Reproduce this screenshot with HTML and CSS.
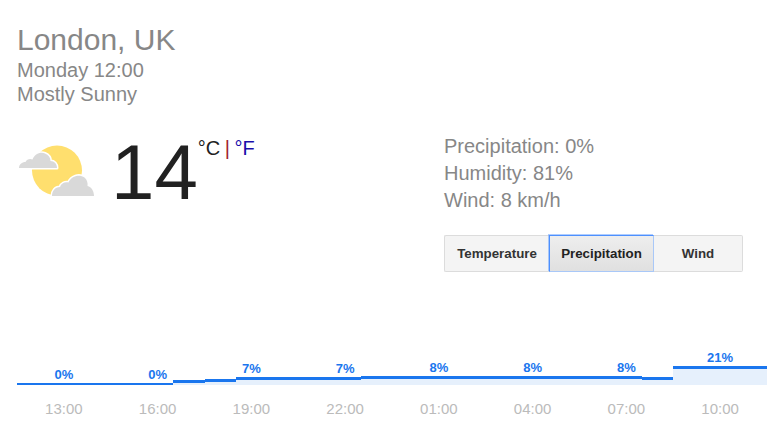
FILE: index.html
```html
<!DOCTYPE html>
<html lang="en">
<head>
<meta charset="utf-8">
<title>London weather</title>
<link rel="stylesheet" href="styles.css">
</head>
<body>
<div class="page">
  <header class="head">
    <div class="city">London, UK</div>
    <div class="sub">Monday 12:00</div>
    <div class="sub">Mostly Sunny</div>
  </header>
  <section class="main">
    <div class="now">
      <svg class="icon" width="80" height="56" viewBox="0 0 80 56" aria-hidden="true">
        <circle class="sun" cx="40" cy="27.5" r="25"/>
        <path class="cloud" d="M2 25C2 21.500 5 19 8.500 19C9.500 16.500 13 15 15.500 16.500C17.500 11.500 23 8.500 28 10.500C31.500 12 33.500 14.500 33.500 18C37.500 18 40 21 40 25Z"/>
        <path class="cloud" d="M35 53C35 48 38 44 43 44C44 40.500 48 38.500 51.500 39.500C54 33.500 62 30.500 67.500 34.500C70 36.500 71 40 70.500 43C74.500 44 77 48 77 53Z"/>
      </svg>
      <div class="temp">14</div>
      <div class="units"><span class="c">°C</span> <span class="sep">|</span> <span class="f">°F</span></div>
    </div>
    <div class="side">
      <div class="facts">
        <div>Precipitation: 0%</div>
        <div>Humidity: 81%</div>
        <div>Wind: 8 km/h</div>
      </div>
      <div class="tabs">
        <div class="tab t1">Temperature</div>
        <div class="tab t2 on">Precipitation</div>
        <div class="tab t3">Wind</div>
      </div>
    </div>
  </section>
  <section class="chart">
    <div class="group"><span class="pct" style="bottom:3px">0%</span><i class="bar zero" style="height:2px"></i><i class="bar zero" style="height:2px"></i><i class="bar zero" style="height:2px"></i></div>
    <div class="group"><span class="pct" style="bottom:3px">0%</span><i class="bar zero" style="height:2px"></i><i class="bar zero" style="height:2px"></i><i class="bar" style="height:5px"></i></div>
    <div class="group"><span class="pct" style="bottom:9px">7%</span><i class="bar" style="height:6px"></i><i class="bar" style="height:8px"></i><i class="bar" style="height:8px"></i></div>
    <div class="group"><span class="pct" style="bottom:9px">7%</span><i class="bar" style="height:8px"></i><i class="bar" style="height:8px"></i><i class="bar" style="height:9px"></i></div>
    <div class="group"><span class="pct" style="bottom:10px">8%</span><i class="bar" style="height:9px"></i><i class="bar" style="height:9px"></i><i class="bar" style="height:9px"></i></div>
    <div class="group"><span class="pct" style="bottom:10px">8%</span><i class="bar" style="height:9px"></i><i class="bar" style="height:9px"></i><i class="bar" style="height:9px"></i></div>
    <div class="group"><span class="pct" style="bottom:10px">8%</span><i class="bar" style="height:9px"></i><i class="bar" style="height:9px"></i><i class="bar" style="height:8px"></i></div>
    <div class="group"><span class="pct" style="bottom:20px">21%</span><i class="bar" style="height:19px"></i><i class="bar" style="height:19px"></i><i class="bar" style="height:19px"></i></div>
  </section>
  <div class="times">
    <span>13:00</span><span>16:00</span><span>19:00</span><span>22:00</span><span>01:00</span><span>04:00</span><span>07:00</span><span>10:00</span>
  </div>
</div>
</body>
</html>
```
FILE: styles.css
```css
* { box-sizing: border-box; }
html, body { margin: 0; background: #fff; }
body { font-family: "Liberation Sans", Arial, sans-serif; color: #878787; overflow: hidden; }
.page { width: 781px; height: 426px; padding: 22px 14px 0 17px; }
.head { height: 107px; }
.city { font-size: 30px; line-height: 36px; }
.sub { font-size: 20px; line-height: 24px; }
.main { display: flex; height: 235px; }
.now { width: 427px; display: flex; align-items: flex-start; }
.icon { margin-top: 14px; flex: none; display: block; }
.sun { fill: #ffdf6e; }
.cloud { fill: #d9d9d9; stroke: #fff; stroke-width: 3px; paint-order: stroke; stroke-linejoin: round; }
.temp { font-size: 78px; line-height: 86px; color: #212121; margin-left: 14px; }
.units { font-size: 20px; line-height: 24px; margin-left: 0; margin-top: 7px; color: #212121; white-space: nowrap; word-spacing: -1px; }
.sep { color: #a01c30; }
.f { color: #1a0dab; }
.side { display: flex; flex-direction: column; }
.facts { font-size: 20px; line-height: 27px; margin-top: 4px; }
.tabs { display: flex; width: 299px; height: 37px; margin-top: 21px; }
.tab { display: flex; align-items: center; justify-content: center; font-size: 13.333px; font-weight: 700; color: #333; background: #f4f4f4; border: 1px solid #dcdcdc; }
.t1 { width: 105px; border-right: 0; border-radius: 2px 0 0 2px; }
.t2 { width: 105px; }
.t3 { width: 89px; border-left: 0; border-radius: 0 2px 2px 0; }
.tab.on { position: relative; color: #222; background: linear-gradient(#eeeeee, #e0e0e0); border-color: #4d90fe #a9c8f8 #a9c8f8 #4d90fe; box-shadow: -1px -1px 0 rgba(77,144,254,.45); }
.chart { display: flex; align-items: flex-end; width: 750px; height: 21px; }
.group { position: relative; flex: 1; display: flex; align-items: flex-end; height: 100%; }
.bar { display: block; flex: 1; background: #e6f0fc; border-top: 3px solid #1a76ee; }
.bar.zero { border-top-width: 2px; }
.pct { position: absolute; left: 0; right: 0; text-align: center; font-size: 13px; font-weight: 700; line-height: 14px; color: #1a76ee; }
.times { display: flex; width: 750px; margin-top: 16px; }
.times span { flex: 1; text-align: center; font-size: 15px; line-height: 16px; color: #bbb; }
```
